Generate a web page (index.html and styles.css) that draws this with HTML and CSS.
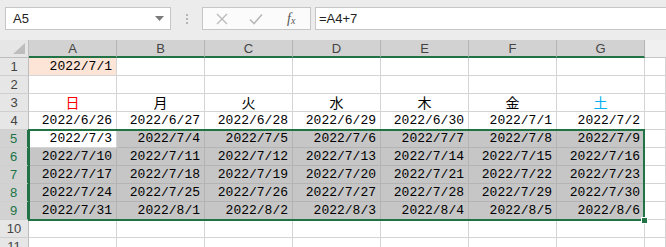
FILE: index.html
```
<html>
    <head>
        <title>Sheet1</title>
        <link rel="stylesheet" href="styles.css">
    </head>
    <body>
        <div class="toolbar">
            <div class="namebox">
                <span>A5</span>
                <svg class="drop" width="9" height="6" viewBox="0 0 9 6"><path d="M0 0H9L4.5 5Z" fill="#7a7a7a"/></svg>
            </div>
            <div class="grip"><i></i><i></i><i></i></div>
            <div class="fxbox">
                <svg width="12" height="12" viewBox="0 0 12 12"><path d="M1 1L11 11M11 1L1 11" stroke="#b9b9b9" stroke-width="1.3" fill="none"/></svg>
                <svg width="14" height="12" viewBox="0 0 14 12"><path d="M1 6.5L5 10.5L13 1.5" stroke="#b9b9b9" stroke-width="1.6" fill="none"/></svg>
                <span class="fx">f<sub>x</sub></span>
            </div>
            <div class="formula">=A4+7</div>
        </div>

        <div class="wrap">
            <div class="sheet">
                <div class="corner"><svg width="12" height="11" viewBox="0 0 12 11"><path d="M12 0V11H0Z" fill="#bdbdbd"/></svg></div>
                <div class="colhead">A</div><div class="colhead">B</div><div class="colhead">C</div><div class="colhead">D</div>
                <div class="colhead">E</div><div class="colhead">F</div><div class="colhead">G</div><div class="colhead rest"></div>

                <div class="rowhead">1</div>
                <div class="cell num peach">2022/7/1</div><div class="cell"></div><div class="cell"></div><div class="cell"></div>
                <div class="cell"></div><div class="cell"></div><div class="cell"></div><div class="cell"></div>

                <div class="rowhead">2</div>
                <div class="cell"></div><div class="cell"></div><div class="cell"></div><div class="cell"></div>
                <div class="cell"></div><div class="cell"></div><div class="cell"></div><div class="cell"></div>

                <div class="rowhead">3</div>
                <div class="cell day sun">日</div><div class="cell day">月</div><div class="cell day">火</div><div class="cell day">水</div>
                <div class="cell day">木</div><div class="cell day">金</div><div class="cell day sat">土</div><div class="cell"></div>

                <div class="rowhead">4</div>
                <div class="cell num">2022/6/26</div><div class="cell num">2022/6/27</div><div class="cell num">2022/6/28</div><div class="cell num">2022/6/29</div>
                <div class="cell num">2022/6/30</div><div class="cell num">2022/7/1</div><div class="cell num">2022/7/2</div><div class="cell"></div>

                <div class="rowhead on">5</div>
                <div class="cell num">2022/7/3</div><div class="cell num sel">2022/7/4</div><div class="cell num sel">2022/7/5</div><div class="cell num sel">2022/7/6</div>
                <div class="cell num sel">2022/7/7</div><div class="cell num sel">2022/7/8</div><div class="cell num sel">2022/7/9</div><div class="cell"></div>

                <div class="rowhead on">6</div>
                <div class="cell num sel">2022/7/10</div><div class="cell num sel">2022/7/11</div><div class="cell num sel">2022/7/12</div><div class="cell num sel">2022/7/13</div>
                <div class="cell num sel">2022/7/14</div><div class="cell num sel">2022/7/15</div><div class="cell num sel">2022/7/16</div><div class="cell"></div>

                <div class="rowhead on">7</div>
                <div class="cell num sel">2022/7/17</div><div class="cell num sel">2022/7/18</div><div class="cell num sel">2022/7/19</div><div class="cell num sel">2022/7/20</div>
                <div class="cell num sel">2022/7/21</div><div class="cell num sel">2022/7/22</div><div class="cell num sel">2022/7/23</div><div class="cell"></div>

                <div class="rowhead on">8</div>
                <div class="cell num sel">2022/7/24</div><div class="cell num sel">2022/7/25</div><div class="cell num sel">2022/7/26</div><div class="cell num sel">2022/7/27</div>
                <div class="cell num sel">2022/7/28</div><div class="cell num sel">2022/7/29</div><div class="cell num sel">2022/7/30</div><div class="cell"></div>

                <div class="rowhead on">9</div>
                <div class="cell num sel">2022/7/31</div><div class="cell num sel">2022/8/1</div><div class="cell num sel">2022/8/2</div><div class="cell num sel">2022/8/3</div>
                <div class="cell num sel">2022/8/4</div><div class="cell num sel">2022/8/5</div><div class="cell num sel">2022/8/6</div><div class="cell"></div>

                <div class="rowhead">10</div>
                <div class="cell"></div><div class="cell"></div><div class="cell"></div><div class="cell"></div>
                <div class="cell"></div><div class="cell"></div><div class="cell"></div><div class="cell"></div>

                <div class="rowhead">11</div>
                <div class="cell"></div><div class="cell"></div><div class="cell"></div><div class="cell"></div>
                <div class="cell"></div><div class="cell"></div><div class="cell"></div><div class="cell"></div>
            </div>
            <!-- selection A5:G9 sits over the grid -->
            <div class="selection"></div>
            <div class="handle"></div>
        </div>
    </body>
</html>
```

FILE: styles.css
```
body {
    margin: 0;
    width: 666px;
    height: 247px;
    overflow: hidden;
    background: #ffffff;
    font-family: "Liberation Sans", Arial, sans-serif;
}

/* formula bar */
.toolbar {
    height: 40px;
    background: #ececec;
    display: flex;
    align-items: flex-start;
    padding-top: 7px;
    box-sizing: border-box;
}
.namebox {
    margin-left: 5px;
    width: 166px;
    height: 23px;
    box-sizing: border-box;
    background: #fff;
    border: 1px solid #c6c6c6;
    display: flex;
    align-items: center;
    justify-content: space-between;
    padding: 0 6px 0 7px;
    font-size: 13px;
    color: #222;
}
.grip {
    width: 31px;
    height: 23px;
    display: flex;
    flex-direction: column;
    align-items: center;
    justify-content: center;
    gap: 2px;
}
.grip i {
    width: 2px;
    height: 2px;
    background: #b5b5b5;
}
.fxbox {
    width: 109px;
    height: 23px;
    box-sizing: border-box;
    background: #fbfbfb;
    border: 1px solid #c6c6c6;
    display: flex;
    align-items: center;
    padding-left: 13px;
    gap: 21px;
}
.fx {
    font-family: "Liberation Serif", serif;
    font-style: italic;
    font-size: 14px;
    color: #555;
    margin-left: 3px;
}
.fx sub {
    font-size: 10px;
    vertical-align: -1px;
}
.formula {
    margin-left: 4px;
    flex: 1;
    height: 23px;
    box-sizing: border-box;
    background: #fff;
    border: 1px solid #c6c6c6;
    border-right: none;
    padding-left: 3px;
    font-size: 13px;
    line-height: 21px;
    color: #222;
}

/* sheet grid */
.wrap {
    position: relative;
}
.sheet {
    display: grid;
    grid-template-columns: 29px repeat(7, 88px) 1fr;
    grid-template-rows: 18px repeat(11, 18px);
}
.sheet > div {
    box-sizing: border-box;
}
.corner {
    background: #e6e6e6;
    border-right: 1px solid #bdbdbd;
    border-bottom: 1px solid #bdbdbd;
    display: flex;
    align-items: flex-end;
    justify-content: flex-end;
    padding: 0 3px 3px 0;
}
.colhead {
    background: #d2d2d2;
    border-right: 1px solid #b5b5b5;
    border-bottom: 2px solid #217346;
    font-size: 13px;
    color: #444;
    text-align: center;
    line-height: 17px;
}
.colhead.rest {
    background: #f0f0f0;
    border-right: none;
    border-bottom: 1px solid #c6c6c6;
}
.rowhead {
    background: #e6e6e6;
    border-right: 1px solid #bdbdbd;
    border-bottom: 1px solid #cfcfcf;
    font-size: 13px;
    color: #444;
    text-align: center;
    line-height: 18px;
}
.rowhead.on {
    background: #d2d2d2;
    color: #217346;
    border-right: 2px solid #217346;
}
.cell {
    border-right: 1px solid #d4d4d4;
    border-bottom: 1px solid #d4d4d4;
    display: flex;
    align-items: flex-end;
    padding: 0 4px 1px 4px;
    font-size: 13px;
    line-height: 15px;
    color: #000;
    white-space: nowrap;
}
.num {
    justify-content: flex-end;
    font-family: "Liberation Mono", "DejaVu Sans Mono", monospace;
}
.day {
    justify-content: center;
    font-family: "Noto Sans CJK JP", sans-serif;
    font-size: 14px;
}
.sun {
    color: #ff0000;
}
.sat {
    color: #00b0f0;
}
.peach {
    background: #fce4d6;
}
.sel {
    background: #c6c6c6;
    border-color: #b4b4b4;
}

/* selection outline */
.selection {
    position: absolute;
    left: 28px;
    top: 89px;
    width: 617px;
    height: 92px;
    box-sizing: border-box;
    border: 2px solid #217346;
}
.handle {
    position: absolute;
    left: 641px;
    top: 177px;
    width: 7px;
    height: 7px;
    box-sizing: border-box;
    background: #217346;
    border: 1px solid #fff;
}
```
